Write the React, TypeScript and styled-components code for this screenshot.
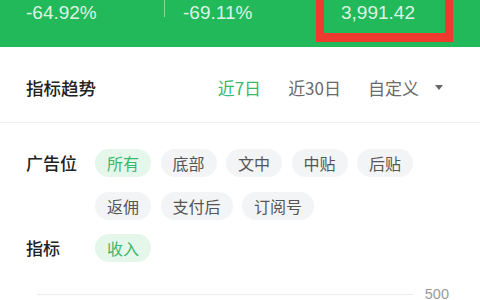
import styled, { createGlobalStyle } from 'styled-components';

const GlobalStyle = createGlobalStyle`
  html, body {
    margin: 0;
    padding: 0;
    background: #ffffff;
  }
  body {
    font-family: "Noto Sans CJK SC", "Noto Sans", sans-serif;
  }
  * {
    box-sizing: border-box;
  }
`;

const GREEN = '#21b95a';
const ACCENT = '#39b76a';

const Page = styled.div`
  width: 480px;
  height: 300px;
  overflow: hidden;
  background: #fff;
`;

const StatBar = styled.div`
  height: 47px;
  background: ${GREEN};
  display: flex;
  align-items: flex-start;
`;

const StatCell = styled.div<{ $width: number; $pad: number }>`
  position: relative;
  width: ${(p) => p.$width}px;
  padding-left: ${(p) => p.$pad}px;
  font-family: "Liberation Sans", Arial, sans-serif;
  font-size: 19px;
  line-height: 26px;
  color: rgba(255, 255, 255, 0.86);
`;

const StatDivider = styled.div`
  width: 1px;
  height: 17px;
  background: rgba(255, 255, 255, 0.45);
`;

const Highlight = styled.div`
  position: absolute;
  left: 0;
  top: -10px;
  width: 137px;
  height: 52px;
  border: 8px solid #ee3a2f;
  border-bottom-width: 9px;
  pointer-events: none;
`;

const TrendRow = styled.div`
  height: 76px;
  padding: 6px 37px 0 26px;
  display: flex;
  align-items: center;
  border-bottom: 1px solid #f1f1f1;
`;

const Title = styled.div`
  flex: 1;
  font-size: 17.5px;
  font-weight: 500;
  color: #222;
`;

const Tabs = styled.div`
  display: flex;
  align-items: center;
  gap: 27px;
`;

const Tab = styled.div<{ $active?: boolean }>`
  font-size: 17px;
  color: ${(p) => (p.$active ? ACCENT : '#6a6a6a')};
  display: flex;
  align-items: center;
  gap: 16px;
`;

const Caret = styled.span`
  width: 0;
  height: 0;
  border-left: 4px solid transparent;
  border-right: 4px solid transparent;
  border-top: 5px solid #666;
`;

const Filters = styled.div`
  padding: 26px 0 0 26px;
  display: flex;
  flex-direction: column;
  gap: 14px;
`;

const FilterRow = styled.div`
  display: flex;
  align-items: flex-start;
`;

const Label = styled.div`
  width: 69px;
  flex: none;
  height: 28px;
  line-height: 28px;
  font-size: 17px;
  font-weight: 500;
  color: #222;
`;

const Chips = styled.div`
  display: flex;
  flex-wrap: wrap;
  width: 330px;
  column-gap: 9.5px;
  row-gap: 15px;
`;

const Chip = styled.div<{ $active?: boolean }>`
  height: 28px;
  padding: 0 12px;
  border-radius: 14px;
  font-size: 16px;
  line-height: 28px;
  color: ${(p) => (p.$active ? ACCENT : '#555')};
  background: ${(p) => (p.$active ? '#e5f6ea' : '#f3f4f5')};
`;

const Chart = styled.div`
  margin-top: 28px;
  padding: 0 31px 0 37px;
  display: flex;
  align-items: flex-start;
  gap: 11px;
`;

const AxisLine = styled.div`
  flex: 1;
  height: 1px;
  margin-top: 4px;
  background: #ececec;
`;

const AxisLabel = styled.div`
  font-family: "Liberation Sans", Arial, sans-serif;
  font-size: 14.5px;
  line-height: 8px;
  color: #9a9a9a;
`;

const slots = ['所有', '底部', '文中', '中贴', '后贴', '返佣', '支付后', '订阅号'];

export default function App() {
  return (
    <Page>
      <GlobalStyle />
      <StatBar>
        <StatCell $width={164} $pad={26}>-64.92%</StatCell>
        <StatDivider />
        <StatCell $width={151} $pad={18}>-69.11%</StatCell>
        <StatCell $width={140} $pad={25}>
          3,991.42
          <Highlight />
        </StatCell>
      </StatBar>
      <TrendRow>
        <Title>指标趋势</Title>
        <Tabs>
          <Tab $active>近7日</Tab>
          <Tab>近30日</Tab>
          <Tab>
            自定义
            <Caret />
          </Tab>
        </Tabs>
      </TrendRow>
      <Filters>
        <FilterRow>
          <Label>广告位</Label>
          <Chips>
            {slots.map((s, i) => (
              <Chip key={s} $active={i === 0}>
                {s}
              </Chip>
            ))}
          </Chips>
        </FilterRow>
        <FilterRow>
          <Label>指标</Label>
          <Chips>
            <Chip $active>收入</Chip>
          </Chips>
        </FilterRow>
      </Filters>
      <Chart>
        <AxisLine />
        <AxisLabel>500</AxisLabel>
      </Chart>
    </Page>
  );
}
